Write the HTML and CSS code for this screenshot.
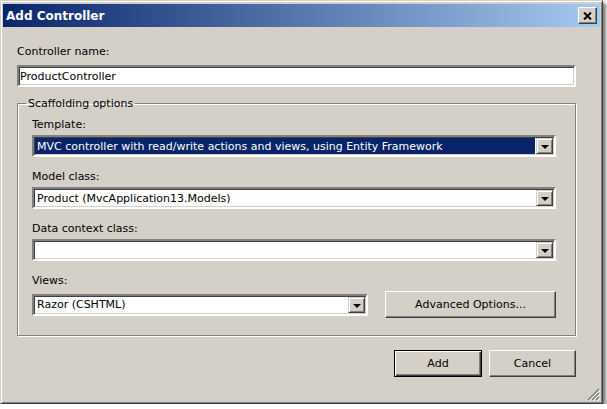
FILE: index.html
```html
<!DOCTYPE html>
<html lang="en">
<head>
    <meta charset="UTF-8">
    <meta name="viewport" content="width=device-width, initial-scale=1.0">
    <title>Add Controller</title>
    <link rel="stylesheet" href="styles.css">
</head>
<body>
    <div class="window">
        <div class="titlebar">
            <span class="title">Add Controller</span>
            <button class="close-btn" aria-label="Close">
                <svg width="9" height="8" viewBox="0 0 9 8"><path d="M1 0.5L8 7.5M8 0.5L1 7.5" stroke="#000" stroke-width="2"/></svg>
            </button>
        </div>
        <div class="content">
            <label class="field-label first" for="controllerName">Controller name:</label>
            <input id="controllerName" class="textbox" type="text" value="ProductController">

            <fieldset class="group">
                <legend>Scaffolding options</legend>
                <div class="field">
                    <div class="field-label">Template:</div>
                    <div class="combo selected">
                        <div class="combo-text"><span>MVC controller with read/write actions and views, using Entity Framework</span></div>
                        <span class="combo-btn"></span>
                    </div>
                </div>
                <div class="field">
                    <div class="field-label">Model class:</div>
                    <div class="combo">
                        <div class="combo-text"><span>Product (MvcApplication13.Models)</span></div>
                        <span class="combo-btn"></span>
                    </div>
                </div>
                <div class="field">
                    <div class="field-label">Data context class:</div>
                    <div class="combo">
                        <div class="combo-text"><span></span></div>
                        <span class="combo-btn"></span>
                    </div>
                </div>
                <div class="field">
                    <div class="field-label">Views:</div>
                    <div class="views-row">
                        <div class="combo views-combo">
                            <div class="combo-text"><span>Razor (CSHTML)</span></div>
                            <span class="combo-btn"></span>
                        </div>
                        <button class="btn adv-btn">Advanced Options...</button>
                    </div>
                </div>
            </fieldset>

            <div class="actions">
                <button class="btn default">Add</button>
                <button class="btn">Cancel</button>
            </div>
        </div>
        <div class="grip">
            <svg width="13" height="13" viewBox="0 0 13 13">
                <path d="M12 1L1 12M12 5L5 12M12 9L9 12" stroke="#808080" stroke-width="1.5"/>
                <path d="M13 2L2 13M13 6L6 13M13 10L10 13" stroke="#fff" stroke-width="1"/>
            </svg>
        </div>
    </div>
</body>
</html>
```

FILE: styles.css
```css
body {
    margin: 0;
    background: #ffffff;
    font-family: Tahoma, "DejaVu Sans", sans-serif;
    font-size: 11px;
    color: #000;
}
.window {
    position: relative;
    width: 603px;
    height: 404px;
    box-sizing: border-box;
    padding: 3px 2px 2px 2px;
    background: #d4d0c8;
    border: 1px solid;
    border-color: #d4d0c8 #404040 #404040 #d4d0c8;
    box-shadow: inset 1px 1px 0 #fff, inset -1px -1px 0 #808080, 3px 3px 3px rgba(0, 0, 0, 0.5);
}
.titlebar {
    height: 23px;
    display: flex;
    align-items: center;
    justify-content: space-between;
    padding: 0 3px 0 3px;
    background: linear-gradient(to right, #0a246a, #a6caf0);
}
.title {
    color: #fff;
    font-weight: bold;
    font-size: 12px;
}
.close-btn {
    width: 19px;
    height: 17px;
    padding: 0;
    display: flex;
    align-items: center;
    justify-content: center;
    background: #d4d0c8;
    border: 1px solid;
    border-color: #fff #404040 #404040 #fff;
    box-shadow: inset -1px -1px 0 #808080;
}
.content {
    padding: 0 24px 0 14px;
}
.field-label {
    display: block;
    line-height: 15px;
    padding-top: 2px;
    margin-bottom: 3px;
}
.field-label.first {
    margin-top: 15px;
    margin-bottom: 6px;
}
.textbox {
    display: block;
    width: 100%;
    height: 22px;
    box-sizing: border-box;
    margin: 0;
    padding: 0 1px;
    font: inherit;
    background: #fff;
    border: 2px solid;
    border-color: #808080 #fff #fff #808080;
    box-shadow: inset 1px 1px 0 #404040, inset -1px -1px 0 #d4d0c8;
    outline: none;
}
.group {
    margin: 9px 0 0 0;
    padding: 4px 19px 17px 14px;
    border: 1px solid #808080;
    box-shadow: 1px 1px 0 #fff, inset 1px 1px 0 #fff;
}
.group legend {
    margin-left: -6px;
    padding: 0 2px;
    line-height: 15px;
}
.field + .field {
    margin-top: 10px;
}
.combo {
    display: flex;
    height: 22px;
    box-sizing: border-box;
    border: 2px solid;
    border-color: #808080 #fff #fff #808080;
    box-shadow: inset 1px 1px 0 #404040, inset -1px -1px 0 #d4d0c8;
    background: #fff;
    padding: 1px;
}
.combo-text {
    flex: 1;
    display: flex;
    align-items: center;
    padding: 1px;
    overflow: hidden;
    white-space: nowrap;
}
.combo-text span {
    padding-left: 1px;
}
.combo.selected .combo-text {
    background: #0a246a;
    color: #fff;
    margin-right: 1px;
}
.combo-btn {
    position: relative;
    width: 17px;
    box-sizing: border-box;
    background: #d4d0c8;
    border: 1px solid;
    border-color: #d4d0c8 #404040 #404040 #d4d0c8;
    box-shadow: inset 1px 1px 0 #fff, inset -1px -1px 0 #808080;
}
.combo-btn::after {
    content: "";
    position: absolute;
    left: 4px;
    top: 6px;
    border-style: solid;
    border-width: 4px 4px 0 4px;
    border-color: #000 transparent transparent transparent;
}
.views-row {
    display: flex;
    align-items: center;
    gap: 17px;
}
.views-combo {
    width: 336px;
}
.btn {
    height: 27px;
    padding: 0;
    font: inherit;
    color: #000;
    background: #d4d0c8;
    border: 1px solid;
    border-color: #fff #404040 #404040 #fff;
    box-shadow: inset -1px -1px 0 #808080, inset 1px 1px 0 #d4d0c8;
}
.adv-btn {
    flex: 1;
}
.actions {
    display: flex;
    justify-content: flex-end;
    gap: 7px;
    margin-top: 14px;
}
.actions .btn {
    width: 87px;
}
.btn.default {
    width: 88px;
    border: 1px solid #000;
    box-shadow: inset 1px 1px 0 #fff, inset -1px -1px 0 #404040, inset -2px -2px 0 #808080;
}
.grip {
    position: absolute;
    right: 2px;
    bottom: 2px;
    width: 13px;
    height: 13px;
}
```
